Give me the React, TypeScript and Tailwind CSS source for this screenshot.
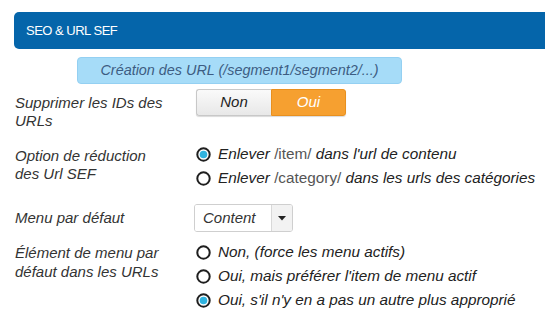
const font = { fontFamily: '"Liberation Sans", Arial, sans-serif' };

const Radio = ({ checked }: { checked?: boolean }) => (
    <svg width="15" height="15" viewBox="0 0 15 15" className="shrink-0">
        <circle cx="7.5" cy="7.5" r="6.2" fill="#fff" stroke="#1f1f1f" strokeWidth="2" />
        {checked && <circle cx="7.5" cy="7.5" r="3.8" fill="#2fb3df" />}
    </svg>
);

const Option = ({ checked, children }: { checked?: boolean; children: React.ReactNode }) => (
    <div className="flex items-center h-[24px] gap-[7px]">
        <Radio checked={checked} />
        <span className="italic text-[15.3px] text-[#222]">{children}</span>
    </div>
);

const App = () => {
    return (
        <div className="w-[545px] h-[313px] bg-white overflow-hidden text-[#333]" style={font}>
            {/* Section header */}
            <div className="mt-[12px] ml-[14px] h-[37px] bg-[#0565aa] rounded-l-[5px] flex items-center pl-[12px]">
                <span className="text-white text-[13px] tracking-[-0.5px]">SEO &amp; URL SEF</span>
            </div>

            {/* Info box */}
            <div className="mt-[8px] ml-[77px] w-[325px] h-[27px] bg-[#a6dcf8] border border-[#94d0f2] rounded-[4px] flex items-center justify-center">
                <span className="italic text-[14.4px] text-[#3d5c82]">Création des URL (/segment1/segment2/...)</span>
            </div>

            {/* Supprimer les IDs */}
            <div className="flex mt-[5px]">
                <div className="w-[181px] pl-[15px] pt-[5px] italic text-[15px] leading-[18px]">
                    Supprimer les IDs des
                    <br />
                    URLs
                </div>
                <div className="ml-[15px] flex h-[27px] rounded-[3px] shadow-[0_1px_1px_rgba(0,0,0,0.15)]">
                    <div className="w-[75px] flex items-center justify-center italic text-[15px] text-[#222] border border-[#c8c8c8] border-r-0 rounded-l-[3px] bg-gradient-to-b from-[#fafafa] to-[#e8e8e8]">
                        Non
                    </div>
                    <div className="w-[75px] flex items-center justify-center italic text-[15px] text-white border border-[#e8901f] rounded-r-[3px] bg-[#f6a030]">
                        Oui
                    </div>
                </div>
            </div>

            {/* Option de reduction */}
            <div className="flex mt-[12px]">
                <div className="w-[181px] pl-[15px] pt-[5px] italic text-[15px] leading-[18px]">
                    Option de réduction
                    <br />
                    des Url SEF
                </div>
                <div className="ml-[15px] flex flex-col">
                    <Option checked>
                        Enlever <span className="not-italic text-[#555]">/item/</span> dans l'url de contenu
                    </Option>
                    <Option>
                        Enlever <span className="not-italic text-[#555]">/category/</span> dans les urls des catégories
                    </Option>
                </div>
            </div>

            {/* Menu par defaut */}
            <div className="flex items-center mt-[14px]">
                <div className="w-[181px] pl-[15px] italic text-[15px]">Menu par défaut</div>
                <div className="ml-[13px] flex w-[99px] h-[28px] border border-[#cfcfcf] rounded-[3px] overflow-hidden">
                    <div className="flex-1 flex items-center pl-[8px] italic text-[15px] text-[#333] bg-white">Content</div>
                    <div className="w-[21px] flex items-center justify-center border-l border-[#d8d8d8] bg-[#f2f2f2]">
                        <svg width="8" height="5" viewBox="0 0 8 5">
                            <path d="M0 0h8L4 4.5z" fill="#222" />
                        </svg>
                    </div>
                </div>
            </div>

            {/* Element de menu */}
            <div className="flex mt-[8px]">
                <div className="w-[181px] pl-[15px] pt-[3px] italic text-[15px] leading-[19px]">
                    Élément de menu par
                    <br />
                    défaut dans les URLs
                </div>
                <div className="ml-[15px] flex flex-col">
                    <Option>Non, (force les menu actifs)</Option>
                    <Option>Oui, mais préférer l'item de menu actif</Option>
                    <Option checked>Oui, s'il n'y en a pas un autre plus approprié</Option>
                </div>
            </div>
        </div>
    );
};

export default App;
